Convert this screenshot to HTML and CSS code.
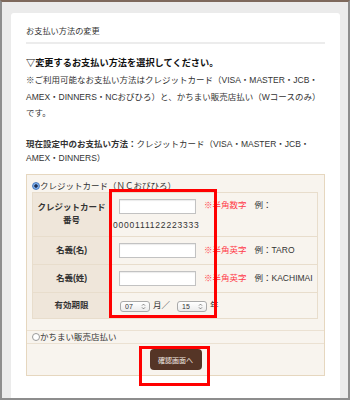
FILE: index.html
```html
<!DOCTYPE html>
<html lang="ja">
<head>
    <meta charset="UTF-8">
    <meta name="viewport" content="width=device-width, initial-scale=1.0">
    <title>お支払い方法の変更</title>
    <link rel="stylesheet" href="styles.css">
</head>
<body>
    <div class="frame">
        <div class="card">
            <h2 class="page-title">お支払い方法の変更</h2>

            <h3 class="lead">▽変更するお支払い方法を選択してください。</h3>
            <p class="note">※ご利用可能なお支払い方法はクレジットカード（VISA・MASTER・JCB・AMEX・DINNERS・NCおびひろ）と、かちまい販売店払い（Wコースのみ）です。</p>

            <p class="current"><b>現在設定中のお支払い方法：</b>クレジットカード（VISA・MASTER・JCB・AMEX・DINNERS）</p>

            <!-- Payment form -->
            <form class="pay-box">
                <div class="pay-section credit">
                    <label class="radio-line"><input type="radio" name="pay" checked>クレジットカード（ＮＣおびひろ）</label>
                    <table class="card-table">
                        <tr>
                            <th>クレジットカード番号</th>
                            <td><input type="text" class="txt"><span class="req">※半角数字</span><span class="example">例：</span><span class="digits">0000111122223333</span></td>
                        </tr>
                        <tr>
                            <th>名義(名)</th>
                            <td><input type="text" class="txt"><span class="req">※半角英字</span><span class="example">例：TARO</span></td>
                        </tr>
                        <tr>
                            <th>名義(姓)</th>
                            <td><input type="text" class="txt"><span class="req">※半角英字</span><span class="example">例：KACHIMAI</span></td>
                        </tr>
                        <tr>
                            <th>有効期限</th>
                            <td>
                                <span class="sel"><select><option>07</option></select><svg width="5" height="7" viewBox="0 0 5 7"><path d="M1 2.6 2.5 1.1 4 2.6M1 4.4 2.5 5.9 4 4.4" fill="none" stroke="#666" stroke-width=".8"/></svg></span><span class="unit">月／</span><span class="sel"><select><option>15</option></select><svg width="5" height="7" viewBox="0 0 5 7"><path d="M1 2.6 2.5 1.1 4 2.6M1 4.4 2.5 5.9 4 4.4" fill="none" stroke="#666" stroke-width=".8"/></svg></span><span class="unit">年</span>
                            </td>
                        </tr>
                    </table>
                </div>

                <div class="pay-section shop">
                    <label class="radio-line"><input type="radio" name="pay">かちまい販売店払い</label>
                </div>

                <div class="pay-section submit">
                    <button type="button" class="confirm-btn">確認画面へ</button>
                </div>
            </form>
        </div>

        <!-- Highlight marks -->
        <div class="mark mark-fields"></div>
        <div class="mark mark-button"></div>
    </div>
</body>
</html>
```

FILE: styles.css
```css
/* Base */
* {
    box-sizing: border-box;
}

body {
    margin: 0;
    font-family: "Liberation Sans", "Noto Sans CJK JP", sans-serif;
    font-size: 8.5px;
    color: #333;
}

/* Window frame */
.frame {
    position: relative;
    height: 400px;
    border: 2px solid #8d8d8d;
    border-top-color: #7e695c;
    background: #ebebeb;
    padding: 11px 8px 0 9px;
    display: flex;
}

.card {
    flex: 1;
    background: #fff;
    border-radius: 3px 3px 0 0;
    padding: 13px 15px 0;
}

/* Headings & text */
.page-title {
    margin: 0;
    font-size: 8.2px;
    font-weight: normal;
    line-height: 12px;
    padding-bottom: 4px;
    border-bottom: 2px solid #ececec;
}

.lead {
    margin: 12px 0 0;
    font-size: 9.2px;
    line-height: 14px;
    color: #111;
}

.note {
    margin: 2px 0 0;
    line-height: 16.5px;
}

.current {
    margin: 15px 0 0;
    line-height: 14.5px;
}

/* Payment box */
.pay-box {
    margin-top: 8px;
    background: #f8f4ee;
    border: 1px solid #e6d7bf;
}

.pay-section {
    border-bottom: 1px solid #ebe1d2;
}

.pay-section.credit {
    padding: 5px 6px 11px 5px;
}

.pay-section.shop {
    padding: 0 5px;
    line-height: 24px;
}

.pay-section.submit {
    border-bottom: 0;
    padding: 5px 0;
    text-align: center;
}

.radio-line {
    display: block;
    line-height: 12px;
}

.radio-line input {
    appearance: none;
    width: 8px;
    height: 8px;
    margin: 0;
    vertical-align: -1px;
    border: 1px solid #9a9a9a;
    border-radius: 50%;
    background: #fff;
}

.radio-line input:checked {
    border-color: #4c7cc0;
    background: radial-gradient(circle, #1d2f55 0 1.4px, #7fb0ec 2px);
}

/* Card table */
.card-table {
    width: 100%;
    border-collapse: collapse;
}

.card-table th,
.card-table td {
    border: 1px solid #e8ddcc;
    padding: 3px 2px;
    height: 26px;
}

.card-table th {
    width: 78px;
    background: #efe6da;
    line-height: 13px;
    text-align: center;
    color: #333;
}

.card-table td {
    line-height: 16.5px;
}

.txt {
    width: 77px;
    height: 15px;
    margin: 3px 0 3px 6px;
    padding: 0 2px;
    border: 1px solid #c2c2c2;
    box-shadow: inset 0 1px 1px rgba(0, 0, 0, 0.08);
    vertical-align: middle;
    background: #fff;
}

.req {
    color: #ff3b4a;
    margin-left: 8px;
}

.example {
    margin-left: 8px;
}

.digits {
    letter-spacing: 0.8px;
}

.sel {
    display: inline-flex;
    align-items: center;
    justify-content: space-between;
    width: 30px;
    height: 11px;
    margin-left: 7px;
    padding: 0 3px 0 4px;
    border: 1px solid #aaa;
    border-radius: 3px;
    background: linear-gradient(#fff, #ececec);
    vertical-align: middle;
}

.sel select {
    appearance: none;
    border: 0;
    padding: 0;
    background: transparent;
    font-family: inherit;
    font-size: 7px;
    color: #333;
    line-height: 9px;
}

.unit {
    margin-left: 3px;
}

/* Button */
.confirm-btn {
    width: 52px;
    height: 21px;
    border: 0;
    border-radius: 4px;
    background: #553526;
    color: #f2eae4;
    font-family: inherit;
    font-size: 7px;
    cursor: pointer;
}

/* Red highlight marks */
.mark {
    position: absolute;
    border: 3px solid #f00;
}

.mark-fields {
    left: 107px;
    top: 187px;
    width: 108px;
    height: 129px;
}

.mark-button {
    left: 137px;
    top: 344px;
    width: 71px;
    height: 40px;
}
```
